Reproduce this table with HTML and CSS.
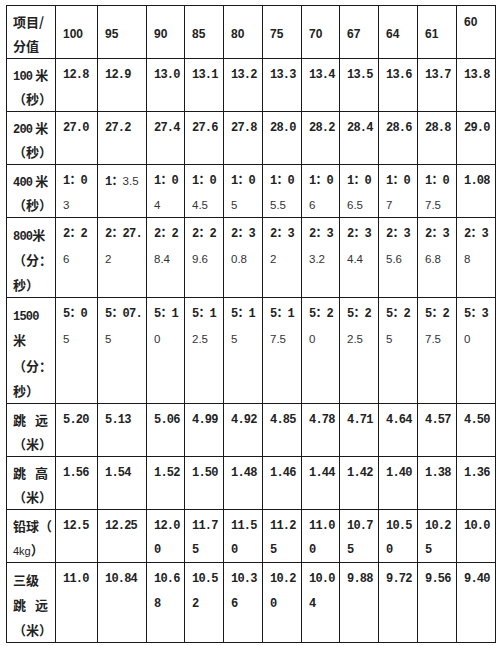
FILE: index.html
```html
<!DOCTYPE html>
<html lang="zh">
<head>
<meta charset="utf-8">
<title>评分标准</title>
<link rel="stylesheet" href="styles.css">
</head>
<body>
<table class="score">
<colgroup>
<col class="c49"><col class="c42"><col class="c49"><col class="c38"><col class="c39"><col class="c39"><col class="c39"><col class="c38"><col class="c39"><col class="c39"><col class="c39"><col class="c39">
</colgroup>
<tr class="l2">
<td class="k"><p>项目/</p><p>分值</p></td>
<td class="h"><p>100</p></td><td class="h"><p>95</p></td><td class="h"><p>90</p></td><td class="h"><p>85</p></td><td class="h"><p>80</p></td><td class="h"><p>75</p></td><td class="h"><p>70</p></td><td class="h"><p>67</p></td><td class="h"><p>64</p></td><td class="h"><p>61</p></td><td class="h top"><p>60</p></td>
</tr>
<tr class="l2">
<td class="k"><p><span class="n">100</span> 米</p><p>（秒）</p></td>
<td><p>12.8</p></td><td><p>12.9</p></td><td><p>13.0</p></td><td><p>13.1</p></td><td><p>13.2</p></td><td><p>13.3</p></td><td><p>13.4</p></td><td><p>13.5</p></td><td><p>13.6</p></td><td><p>13.7</p></td><td><p>13.8</p></td>
</tr>
<tr class="l2">
<td class="k"><p><span class="n">200</span> 米</p><p>（秒）</p></td>
<td><p>27.0</p></td><td><p>27.2</p></td><td><p>27.4</p></td><td><p>27.6</p></td><td><p>27.8</p></td><td><p>28.0</p></td><td><p>28.2</p></td><td><p>28.4</p></td><td><p>28.6</p></td><td><p>28.8</p></td><td><p>29.0</p></td>
</tr>
<tr class="l2">
<td class="k"><p><span class="n">400</span> 米</p><p>（秒）</p></td>
<td><p>1：0</p><p class="r">3</p></td>
<td><p>1：<span class="r">3.5</span></p></td>
<td><p>1：0</p><p class="r">4</p></td>
<td><p>1：0</p><p class="r">4.5</p></td>
<td><p>1：0</p><p class="r">5</p></td>
<td><p>1：0</p><p class="r">5.5</p></td>
<td><p>1：0</p><p class="r">6</p></td>
<td><p>1：0</p><p class="r">6.5</p></td>
<td><p>1：0</p><p class="r">7</p></td>
<td><p>1：0</p><p class="r">7.5</p></td>
<td><p>1.08</p></td>
</tr>
<tr class="l3">
<td class="k"><p><span class="n">800</span>米</p><p>（分：</p><p>秒）</p></td>
<td><p>2：2</p><p class="r">6</p></td>
<td><p>2：27.</p><p class="r">2</p></td>
<td><p>2：2</p><p class="r">8.4</p></td>
<td><p>2：2</p><p class="r">9.6</p></td>
<td><p>2：3</p><p class="r">0.8</p></td>
<td><p>2：3</p><p class="r">2</p></td>
<td><p>2：3</p><p class="r">3.2</p></td>
<td><p>2：3</p><p class="r">4.4</p></td>
<td><p>2：3</p><p class="r">5.6</p></td>
<td><p>2：3</p><p class="r">6.8</p></td>
<td><p>2：3</p><p class="r">8</p></td>
</tr>
<tr class="l4">
<td class="k"><p><span class="n">1500</span></p><p>米</p><p>（分：</p><p>秒）</p></td>
<td><p>5：0</p><p class="r">5</p></td>
<td><p>5：07.</p><p class="r">5</p></td>
<td><p>5：1</p><p class="r">0</p></td>
<td><p>5：1</p><p class="r">2.5</p></td>
<td><p>5：1</p><p class="r">5</p></td>
<td><p>5：1</p><p class="r">7.5</p></td>
<td><p>5：2</p><p class="r">0</p></td>
<td><p>5：2</p><p class="r">2.5</p></td>
<td><p>5：2</p><p class="r">5</p></td>
<td><p>5：2</p><p class="r">7.5</p></td>
<td><p>5：3</p><p class="r">0</p></td>
</tr>
<tr class="l2">
<td class="k"><p>跳&ensp;&thinsp;远</p><p>（米）</p></td>
<td><p>5.20</p></td><td><p>5.13</p></td><td><p>5.06</p></td><td><p>4.99</p></td><td><p>4.92</p></td><td><p>4.85</p></td><td><p>4.78</p></td><td><p>4.71</p></td><td><p>4.64</p></td><td><p>4.57</p></td><td><p>4.50</p></td>
</tr>
<tr class="l2">
<td class="k"><p>跳&ensp;&thinsp;高</p><p>（米）</p></td>
<td><p>1.56</p></td><td><p>1.54</p></td><td><p>1.52</p></td><td><p>1.50</p></td><td><p>1.48</p></td><td><p>1.46</p></td><td><p>1.44</p></td><td><p>1.42</p></td><td><p>1.40</p></td><td><p>1.38</p></td><td><p>1.36</p></td>
</tr>
<tr class="l2">
<td class="k"><p>铅球（</p><p><span class="kg">4kg</span>）</p></td>
<td><p>12.5</p></td><td><p>12.25</p></td><td><p>12.0</p><p>0</p></td><td><p>11.7</p><p>5</p></td><td><p>11.5</p><p>0</p></td><td><p>11.2</p><p>5</p></td><td><p>11.0</p><p>0</p></td><td><p>10.7</p><p>5</p></td><td><p>10.5</p><p>0</p></td><td><p>10.2</p><p>5</p></td><td><p>10.0</p></td>
</tr>
<tr class="l3">
<td class="k"><p>三级</p><p>跳&ensp;&thinsp;远</p><p>（米）</p></td>
<td><p>11.0</p></td><td><p>10.84</p></td><td><p>10.6</p><p>8</p></td><td><p>10.5</p><p>2</p></td><td><p>10.3</p><p>6</p></td><td><p>10.2</p><p>0</p></td><td><p>10.0</p><p>4</p></td><td><p>9.88</p></td><td><p>9.72</p></td><td><p>9.56</p></td><td><p>9.40</p></td>
</tr>
</table>
</body>
</html>
```

FILE: styles.css
```css
html, body {
  margin: 0;
  padding: 0;
  background: #ffffff;
}

body {
  padding: 5px 0 0 6px;
}

.score {
  border-collapse: collapse;
  table-layout: fixed;
  width: 490px;
  color: #222222;
}

.c49 { width: 49px; }
.c42 { width: 42px; }
.c39 { width: 39px; }
.c38 { width: 38px; }

.score td {
  border: 1px solid #1a1a1a;
  padding: 4px 0 0 7px;
  vertical-align: top;
  white-space: nowrap;
  overflow: visible;
  font-family: "Liberation Mono", "Noto Sans CJK SC", monospace;
  font-size: 12px;
  letter-spacing: -0.8px;
  font-weight: bold;
}

.score p {
  margin: 0;
  height: var(--lh);
  line-height: var(--lh);
  overflow: visible;
}

.l2 { --lh: 24px; }
.l3 { --lh: 25px; }
.l4 { --lh: 25.25px; }

.score td.k {
  padding-left: 6px;
  font-family: "Noto Sans CJK SC", sans-serif;
  font-size: 13px;
  letter-spacing: 0;
  font-weight: bold;
}

.k .n {
  font-family: "Liberation Mono", monospace;
  font-size: 12px;
  letter-spacing: -0.8px;
}

.k .kg {
  font-family: "Liberation Sans", sans-serif;
  font-weight: normal;
  font-size: 11px;
}

.score td.h {
  vertical-align: middle;
  font-family: "Liberation Sans", sans-serif;
  font-size: 12px;
  letter-spacing: 0;
  font-weight: bold;
}

.score td.h.top {
  vertical-align: top;
}

.r {
  font-family: "Liberation Sans", sans-serif;
  font-weight: normal;
  font-size: 11.5px;
  letter-spacing: 0;
  color: #333333;
}
```
